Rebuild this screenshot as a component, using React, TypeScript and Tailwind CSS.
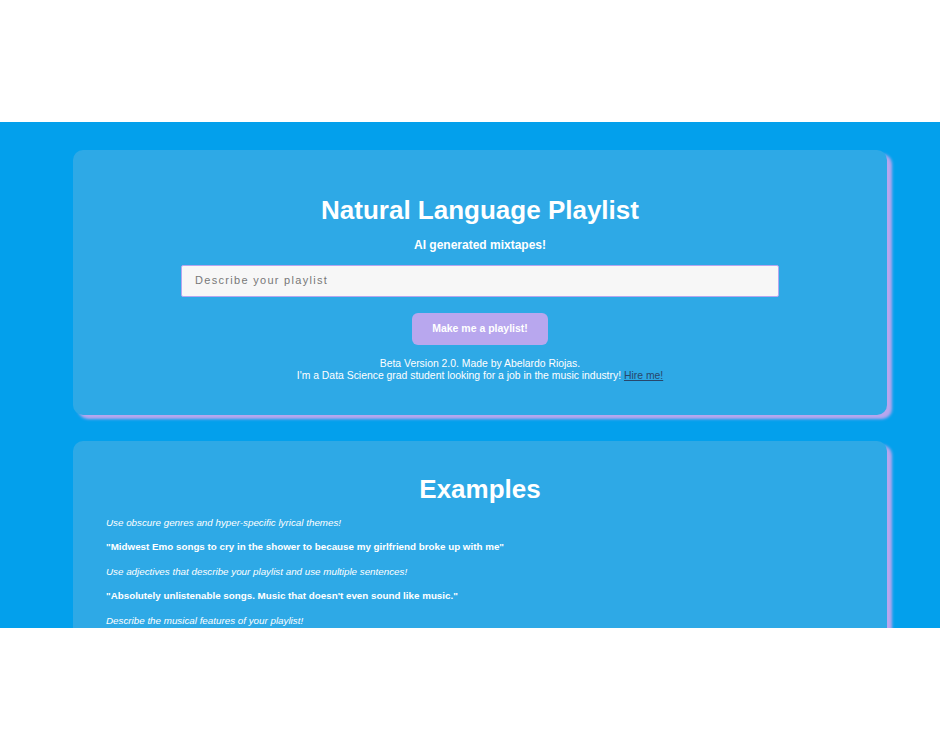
import React from "react";

const font = { fontFamily: '"Liberation Sans", Arial, Helvetica, sans-serif' };

function Card({ children, className = "" }: { children: React.ReactNode; className?: string }) {
  return (
    <div
      className={
        "ml-[73px] w-[814px] rounded-[10px] bg-[#2ea9e6] shadow-[5px_4px_3px_#b8a6ee] text-white " +
        className
      }
    >
      {children}
    </div>
  );
}

const examples: { text: string; hint: boolean }[] = [
  { text: "Use obscure genres and hyper-specific lyrical themes!", hint: true },
  { text: "\"Midwest Emo songs to cry in the shower to because my girlfriend broke up with me\"", hint: false },
  { text: "Use adjectives that describe your playlist and use multiple sentences!", hint: true },
  { text: "\"Absolutely unlistenable songs. Music that doesn't even sound like music.\"", hint: false },
  { text: "Describe the musical features of your playlist!", hint: true },
];

export default function App() {
  return (
    <div className="w-[940px] h-[750px] bg-white" style={font}>
      <div className="h-[122px]" />
      <main className="h-[506px] overflow-hidden bg-[#03a0ec] pt-[28px]">
        <Card className="pt-[45px] pb-[32px] flex flex-col items-center">
          <h1 className="text-[26px] leading-[30px] font-bold">Natural Language Playlist</h1>
          <p className="mt-[13px] text-[12px] leading-[14px] font-bold">AI generated mixtapes!</p>
          <input
            type="text"
            placeholder="Describe your playlist"
            className="mt-[13px] w-[598px] h-[32px] rounded-[2px] border border-[#b5a6ef] bg-[#f7f7f7] px-[13px] pb-[3px] text-[11px] tracking-[1.3px] text-[#444] placeholder:text-[#777] outline-none"
          />
          <button className="mt-[16px] w-[136px] h-[32px] rounded-[6px] bg-[#b8a7ee] text-[10.5px] font-bold text-white">
            Make me a playlist!
          </button>
          <div className="mt-[13px] text-center text-[10.4px] leading-[12.3px]">
            <p>Beta Version 2.0. Made by Abelardo Riojas.</p>
            <p>
              I'm a Data Science grad student looking for a job in the music industry!{" "}
              <a href="#" className="text-[#28476b] underline">
                Hire me!
              </a>
            </p>
          </div>
        </Card>

        <Card className="mt-[26px] pt-[33px] pb-[33px] px-[33px]">
          <h2 className="text-center text-[26px] leading-[30px] font-bold">Examples</h2>
          <div className="mt-[13px] flex flex-col gap-[12.2px] text-[9.8px] leading-[12.3px]">
            {examples.map((e, i) => (
              <p key={i} className={e.hint ? "italic" : "font-bold"}>
                {e.text}
              </p>
            ))}
          </div>
        </Card>
      </main>
    </div>
  );
}
